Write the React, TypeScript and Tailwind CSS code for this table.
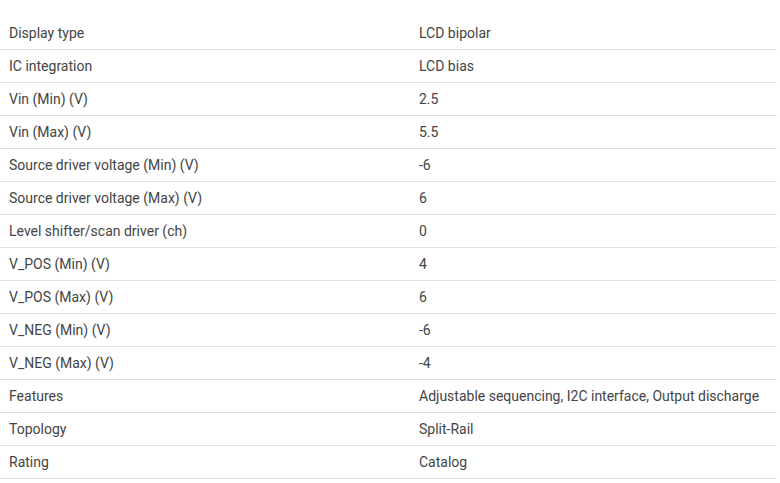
const rows: [string, string][] = [
  ["Display type", "LCD bipolar"],
  ["IC integration", "LCD bias"],
  ["Vin (Min) (V)", "2.5"],
  ["Vin (Max) (V)", "5.5"],
  ["Source driver voltage (Min) (V)", "-6"],
  ["Source driver voltage (Max) (V)", "6"],
  ["Level shifter/scan driver (ch)", "0"],
  ["V_POS (Min) (V)", "4"],
  ["V_POS (Max) (V)", "6"],
  ["V_NEG (Min) (V)", "-6"],
  ["V_NEG (Max) (V)", "-4"],
  ["Features", "Adjustable sequencing, I2C interface, Output discharge"],
  ["Topology", "Split-Rail"],
  ["Rating", "Catalog"],
];

const App = () => {
  return (
    <div className="min-h-screen bg-white pt-[17px] font-['Roboto',sans-serif] text-[14px] text-[#444]">
      <div className="w-[777px]">
        {rows.map(([label, value]) => (
          <div
            key={label}
            className="grid h-[33px] grid-cols-[410px_1fr] items-center border-b border-[#e0e0e0]"
          >
            <div className="pl-[9px]">{label}</div>
            <div className="pl-[9px]">{value}</div>
          </div>
        ))}
      </div>
    </div>
  );
};

export default App;
